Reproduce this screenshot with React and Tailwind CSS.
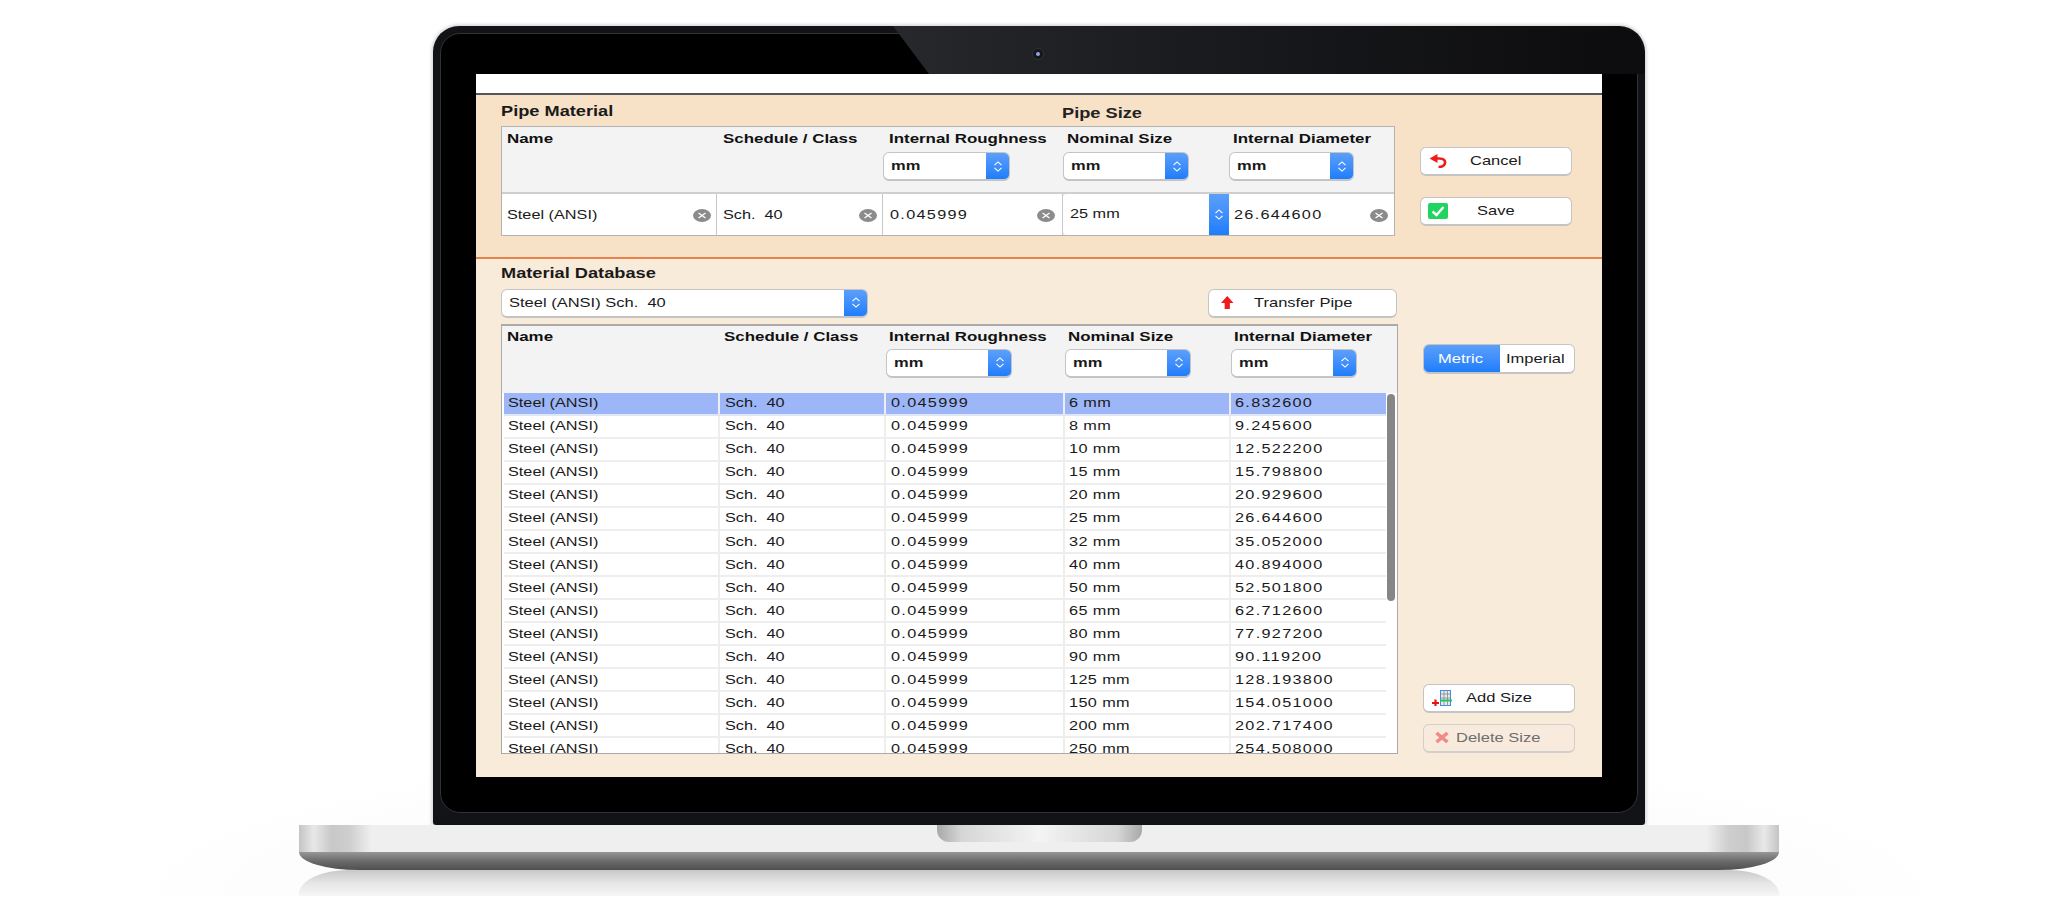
import React from "react";

const rows = [
    ["6 mm", "6.832600"],
    ["8 mm", "9.245600"],
    ["10 mm", "12.522200"],
    ["15 mm", "15.798800"],
    ["20 mm", "20.929600"],
    ["25 mm", "26.644600"],
    ["32 mm", "35.052000"],
    ["40 mm", "40.894000"],
    ["50 mm", "52.501800"],
    ["65 mm", "62.712600"],
    ["80 mm", "77.927200"],
    ["90 mm", "90.119200"],
    ["125 mm", "128.193800"],
    ["150 mm", "154.051000"],
    ["200 mm", "202.717400"],
    ["250 mm", "254.508000"],
];

// the screenshot is stretched sideways, so the text is too
function T({ className = "", children }) {
    return <span className={"inline-block origin-left scale-x-[1.3] whitespace-nowrap " + className}>{children}</span>;
}

function Chevrons() {
    return (
        <svg viewBox="0 0 10 12" preserveAspectRatio="none" className="h-[11px] w-[10px]" fill="none" stroke="white" strokeWidth="1.1">
            <path d="M1.5 4.5 L5 1 L8.5 4.5" />
            <path d="M1.5 7.5 L5 11 L8.5 7.5" />
        </svg>
    );
}

function BlueTab({ className = "" }) {
    return (
        <div className={"flex shrink-0 items-center justify-center bg-gradient-to-b from-[#5b9ffa] to-[#1c7dfb] " + className}>
            <Chevrons />
        </div>
    );
}

function Select({ className = "", bold = true, children }) {
    return (
        <div className={"flex h-[29px] items-stretch overflow-hidden rounded-[6px] border border-[#c4c4c4] border-b-2 bg-white " + className}>
            <div className="flex flex-1 items-center pl-[7px] pt-[2px] text-[12.7px]">
                <T className={bold ? "font-bold" : ""}>{children}</T>
            </div>
            <BlueTab className="w-[23px]" />
        </div>
    );
}

function ClearIcon() {
    return (
        <svg viewBox="0 0 18 13" className="h-[13px] w-[18px] shrink-0">
            <ellipse cx="9" cy="6.5" rx="9" ry="6.5" fill="#8b8b8b" />
            <path d="M5.5 4 L12.5 9 M12.5 4 L5.5 9" stroke="white" strokeWidth="1.3" />
        </svg>
    );
}

function Button({ className = "", iconBox, label, muted }) {
    return (
        <div className={"flex h-[29px] items-center rounded-[6px] border border-b-2 text-[12.7px] " + (muted ? "border-[#d2d0cc] bg-[#f8ebdd] text-[#6e6e6e] " : "border-[#c4c4c4] bg-white text-[#1a1a1a] ") + className}>
            {iconBox}
            <T className="pt-[2px]">{label}</T>
        </div>
    );
}

function Header({ children, select, pad = "pl-[5px]" }) {
    return (
        <div className="flex flex-col">
            <div className={"h-[17px] text-[13px] font-bold leading-[17px] text-[#111111] " + pad}>
                <T>{children}</T>
            </div>
            {select}
        </div>
    );
}

function PipeMaterial() {
    const cell = "flex items-center justify-between border-r border-[#c9c9c9] text-[12.5px]";
    return (
        <div className="flex h-[162px] bg-[#f7e1c7] pl-[25px]">
            <div className="w-[894px]">
                <div className="flex h-[31px] items-center pt-[2px]">
                    <div className="w-[561px] text-[14px] font-bold">
                        <T>Pipe Material</T>
                    </div>
                    <div className="mt-[3px] text-[14px] font-bold text-[#222222]">
                        <T>Pipe Size</T>
                    </div>
                </div>
                <div className="grid grid-cols-[215px_166px_180px_166px_165px] border border-[#b2b2b2]">
                    <div className="col-span-5 grid h-[67px] grid-cols-subgrid border-b-2 border-[#cfcfcf] bg-[#f3f3f3] pt-[3px]">
                        <Header>Name</Header>
                        <Header pad="pl-[6px]">Schedule / Class</Header>
                        <Header
                            pad="pl-[6px]"
                            select={<Select className="mt-[5px] w-[127px]">mm</Select>}
                        >
                            Internal Roughness
                        </Header>
                        <Header
                            pad="pl-[4px]"
                            select={<Select className="mt-[5px] w-[126px]">mm</Select>}
                        >
                            Nominal Size
                        </Header>
                        <Header
                            pad="pl-[4px]"
                            select={<Select className="mt-[5px] w-[125px]">mm</Select>}
                        >
                            Internal Diameter
                        </Header>
                    </div>
                    <div className={cell + " h-[41px] bg-white pl-[5px] pr-[5px] pt-px"}>
                        <T>Steel (ANSI)</T>
                        <ClearIcon />
                    </div>
                    <div className={cell + " h-[41px] bg-white pl-[6px] pr-[5px] pt-px"}>
                        <T>Sch.&nbsp; 40</T>
                        <ClearIcon />
                    </div>
                    <div className={cell + " h-[41px] bg-white pl-[7px] pr-[7px] pt-px"}>
                        <T className="tracking-[1px]">0.045999</T>
                        <ClearIcon />
                    </div>
                    <div className="flex h-[41px] items-stretch justify-between rounded-l-[4px] bg-white pl-[7px] text-[12.5px]">
                        <T className="self-center">25 mm</T>
                        <BlueTab className="w-[20px]" />
                    </div>
                    <div className={cell + " h-[41px] border-r-0 bg-white pl-[5px] pr-[6px] pt-px"}>
                        <T className="tracking-[1px]">26.644600</T>
                        <ClearIcon />
                    </div>
                </div>
            </div>
            <div className="ml-[25px] flex w-[152px] flex-col gap-[21px] pt-[52px]">
                <Button
                    label="Cancel"
                    iconBox={
                        <svg viewBox="0 0 18 14" preserveAspectRatio="none" className="ml-[8px] mr-[23px] h-[14px] w-[18px] shrink-0" fill="none">
                            <path d="M0.5 4.5 L8.5 0 L8.5 9 Z" fill="#f01c1c" />
                            <path d="M6 4.5 H10.5 C14.5 4.5 16.5 6.5 16 9 C15.5 11.5 13 13 9.5 13" stroke="#f01c1c" strokeWidth="2.6" />
                        </svg>
                    }
                />
                <Button
                    label="Save"
                    iconBox={
                        <svg viewBox="0 0 20 16" preserveAspectRatio="none" className="ml-[7px] mr-[29px] h-[16px] w-[20px] shrink-0">
                            <rect width="20" height="16" rx="2" fill="#1fd45f" />
                            <path d="M4.5 8.5 L8.5 12 L15.5 4" fill="none" stroke="white" strokeWidth="2.4" />
                        </svg>
                    }
                />
            </div>
        </div>
    );
}

function MaterialDatabase() {
    return (
        <div className="flex flex-1 bg-[#f9ebda] pl-[25px]">
            <div className="w-[897px]">
                <div className="flex h-[30px] items-center text-[14px] font-bold">
                    <T>Material Database</T>
                </div>
                <div className="flex h-[29px] w-[896px] justify-between">
                    <Select className="w-[367px]" bold={false}>
                        Steel (ANSI) Sch.&nbsp; 40
                    </Select>
                    <Button
                        className="w-[189px]"
                        label="Transfer Pipe"
                        iconBox={
                            <svg viewBox="0 0 12 13" preserveAspectRatio="none" className="ml-[12px] mr-[20px] h-[13px] w-[12.5px] shrink-0">
                                <path d="M6 0 L12 7 L8.5 7 L8.5 13 L3.5 13 L3.5 7 L0 7 Z" fill="#f01c1c" />
                            </svg>
                        }
                    />
                </div>
                <div className="mt-[6px] h-[430px] border border-[#aaaaaa] border-t-2 bg-[#f3f3f3]">
                    <div className="grid h-[67px] grid-cols-[218px_166px_179px_166px_156px] pt-[2px]">
                        <Header pad="pl-[5px]">Name</Header>
                        <Header pad="pl-[4px]">Schedule / Class</Header>
                        <Header
                            pad="pl-[3px]"
                            select={<Select className="mt-[4px] w-[126px]">mm</Select>}
                        >
                            Internal Roughness
                        </Header>
                        <Header
                            pad="pl-[3px]"
                            select={<Select className="mt-[4px] w-[126px]">mm</Select>}
                        >
                            Nominal Size
                        </Header>
                        <Header
                            pad="pl-[3px]"
                            select={<Select className="mt-[4px] w-[126px]">mm</Select>}
                        >
                            Internal Diameter
                        </Header>
                    </div>
                    <div className="relative h-[360px] overflow-hidden bg-white pl-[2px]">
                        {rows.map(([size, diameter], i) => (
                            <div
                                key={size}
                                className={"grid h-[23.07px] w-[882px] grid-cols-[216px_166px_179px_166px_155px] items-stretch border-b-2 text-[12.5px] " + (i === 0 ? "border-[#dfe6f8] bg-[#9db6f7]" : "border-[#eeeeee] bg-white")}
                            >
                                <div className="flex items-center border-r-2 border-[#eeeeee] pl-[4px] pt-px"><T>Steel (ANSI)</T></div>
                                <div className="flex items-center border-r-2 border-[#eeeeee] pl-[5px] pt-px"><T>Sch.&nbsp; 40</T></div>
                                <div className="flex items-center border-r-2 border-[#eeeeee] pl-[5px] pt-px"><T className="tracking-[1px]">0.045999</T></div>
                                <div className="flex items-center border-r-2 border-[#eeeeee] pl-[4px] pt-px"><T className="tracking-[0.3px]">{size}</T></div>
                                <div className="flex items-center pl-[4px] pt-px"><T className="tracking-[1px]">{diameter}</T></div>
                            </div>
                        ))}
                        <div className="absolute right-[2px] top-[1px] h-[207px] w-[8px] rounded-full bg-[#868686]" />
                    </div>
                </div>
            </div>
            <div className="ml-[25px] flex w-[152px] flex-col pt-[85px]">
                <div className="flex h-[30px] overflow-hidden rounded-[6px] border border-[#c4c4c4] border-b-2 bg-white text-[12.7px]">
                    <div className="flex w-[76px] items-center justify-center bg-gradient-to-b from-[#5b9ffa] to-[#1c7dfb] pr-[14px] pt-[3px] text-white">
                        <T>Metric</T>
                    </div>
                    <div className="flex flex-1 items-center pl-[6px] pt-[3px] text-[#1a1a1a]">
                        <T>Imperial</T>
                    </div>
                </div>
                <div className="mt-[310px] flex flex-col gap-[11px]">
                    <Button
                        label="Add Size"
                        iconBox={
                            <svg viewBox="0 0 20 16" preserveAspectRatio="none" className="ml-[8px] mr-[14px] h-[16px] w-[20px] shrink-0">
                                <rect x="8.5" y="0.5" width="10" height="15" fill="#e8e8e8" stroke="#3b8cf5" />
                                <path d="M12 0 V16 M15.5 0 V16 M8 4 H19 M8 8 H19" stroke="#888888" strokeWidth="0.8" />
                                <path d="M8 10.5 H20" stroke="#22c55e" strokeWidth="2" />
                                <path d="M0 13 H7 M3.5 9.5 V16" stroke="#f01010" strokeWidth="2.2" />
                            </svg>
                        }
                    />
                    <Button
                        muted
                        label="Delete Size"
                        iconBox={
                            <svg viewBox="0 0 14 11" preserveAspectRatio="none" className="ml-[11px] mr-[7px] h-[11px] w-[14px] shrink-0">
                                <path d="M1.5 1 L12.5 10 M12.5 1 L1.5 10" stroke="#f08b86" strokeWidth="3.5" />
                            </svg>
                        }
                    />
                </div>
            </div>
        </div>
    );
}

function Screen() {
    return (
        <div className="flex h-[703px] w-[1126px] flex-col bg-white text-[#1a1a1a]">
            <div className="box-content h-[19px] shrink-0 border-b-2 border-[#555555]" />
            <PipeMaterial />
            <div className="h-[1.5px] shrink-0 bg-[#e8814a]" />
            <MaterialDatabase />
        </div>
    );
}

export default function App() {
    return (
        <div className="relative flex h-[907px] w-[2048px] flex-col items-center overflow-hidden bg-white pl-[30px] pt-[26px] font-['Liberation_Sans',Arial,sans-serif]">
            <div className="absolute left-[130px] top-[740px] h-[156px] w-[1818px] bg-[radial-gradient(ellipse_at_bottom,#f3f3f3,#ffffff_72%)]" />

            <div className="relative h-[799px] w-[1212px] rounded-t-[26px] rounded-b-[3px] bg-[#121316] px-[7px] pb-[12px] pt-[7px] shadow-[0_0_3px_2px_#dddddd]">
                <div className="h-full rounded-[20px] border border-[#303236] bg-black px-[35px] pb-[35px] pt-[40px]">
                    <Screen />
                </div>
                <div className="absolute left-[460px] right-0 top-0 h-[48px] bg-gradient-to-r from-[#26282c] via-[#17181b] to-[#0c0c0e] [clip-path:polygon(0_0,36px_100%,100%_100%,100%_26px,calc(100%_-_8px)_8px,calc(100%_-_26px)_0)]" />
                <div className="absolute left-[600px] top-[23px] flex h-[10px] w-[10px] items-center justify-center rounded-full bg-[#14161a] ring-1 ring-[#2f3135]">
                    <div className="h-[4px] w-[4px] rounded-full bg-[#8ea6d8]" />
                </div>
            </div>

            <div className="relative flex w-[1480px] flex-col">
                <div className="h-[27px] bg-[linear-gradient(to_right,#c4c4c4_0,#e8e8e8_1%,#c8c8c8_2.2%,#cecece_3.4%,#efefef_4.9%,#efefef_95.1%,#cecece_96.6%,#c8c8c8_97.8%,#e8e8e8_99%,#c4c4c4_100%)]">
                    <div className="mx-auto h-[17px] w-[205px] rounded-b-[12px] bg-[linear-gradient(to_right,#a8a8a8_0,#d6d6d6_12%,#f4f4f4_50%,#d6d6d6_88%,#a8a8a8_100%)]" />
                </div>
                <div className="h-[18px] rounded-b-[60px_18px] bg-gradient-to-b from-[#979797] via-[#6c6c6c] to-[#4f4f4f]" />
                <div className="h-[26px] rounded-t-[50px_24px] bg-gradient-to-b from-[#c8c8c8] via-[#e6e6e6] to-[#f6f6f6]" />
            </div>
        </div>
    );
}
